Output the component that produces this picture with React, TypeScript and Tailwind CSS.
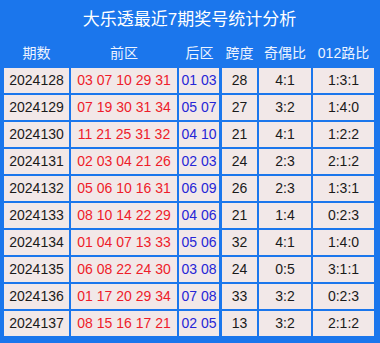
import React from "react";

const rows: [string, string, string, string, string, string][] = [
  ["2024128", "03 07 10 29 31", "01 03", "28", "4:1", "1:3:1"],
  ["2024129", "07 19 30 31 34", "05 07", "27", "3:2", "1:4:0"],
  ["2024130", "11 21 25 31 32", "04 10", "21", "4:1", "1:2:2"],
  ["2024131", "02 03 04 21 26", "02 03", "24", "2:3", "2:1:2"],
  ["2024132", "05 06 10 16 31", "06 09", "26", "2:3", "1:3:1"],
  ["2024133", "08 10 14 22 29", "04 06", "21", "1:4", "0:2:3"],
  ["2024134", "01 04 07 13 33", "05 06", "32", "4:1", "1:4:0"],
  ["2024135", "06 08 22 24 30", "03 08", "24", "0:5", "3:1:1"],
  ["2024136", "01 17 20 29 34", "07 08", "33", "3:2", "0:2:3"],
  ["2024137", "08 15 16 17 21", "02 05", "13", "3:2", "2:1:2"],
];

const cols = "grid grid-cols-[65px_106px_40px_36px_52px_61px] gap-x-[2px]";

export default function App() {
  return (
    <div
      className="w-[380px] h-[343px] bg-[#1b76ec] pl-[4px] pr-[5px] pb-[4px] flex flex-col"
      style={{ fontFamily: '"Liberation Sans", Arial, "Noto Sans CJK SC", sans-serif' }}
    >
      <div className="h-[40px] flex items-center justify-center text-white text-[17px]">
        大乐透最近7期奖号统计分析
      </div>
      <div className={`${cols} h-[28px] items-center text-[14px] text-[#eef4ff] text-center pb-[2px]`}>
        <div>期数</div>
        <div>前区</div>
        <div className="-mr-[1px]">后区</div>
        <div className="ml-[1px]">跨度</div>
        <div>奇偶比</div>
        <div>012路比</div>
      </div>
      <div className="flex flex-col gap-y-[2px]">
        {rows.map((r) => (
          <div key={r[0]} className={`${cols} h-[25px] text-[14px] text-center`}>
            <div className="bg-[#f2e8e8] flex items-center justify-center text-[#1a1a1a]">{r[0]}</div>
            <div className="bg-[#f2e8e8] flex items-center justify-center text-[#ee1c2a] whitespace-nowrap">{r[1]}</div>
            <div className="bg-[#f2e8e8] flex items-center justify-center text-[#2626d6] whitespace-nowrap">{r[2]}</div>
            <div className="bg-[#f2e8e8] flex items-center justify-center text-[#1a1a1a] ml-[1px]">{r[3]}</div>
            <div className="bg-[#f2e8e8] flex items-center justify-center text-[#1a1a1a]">{r[4]}</div>
            <div className="bg-[#f2e8e8] flex items-center justify-center text-[#1a1a1a]">{r[5]}</div>
          </div>
        ))}
      </div>
    </div>
  );
}
